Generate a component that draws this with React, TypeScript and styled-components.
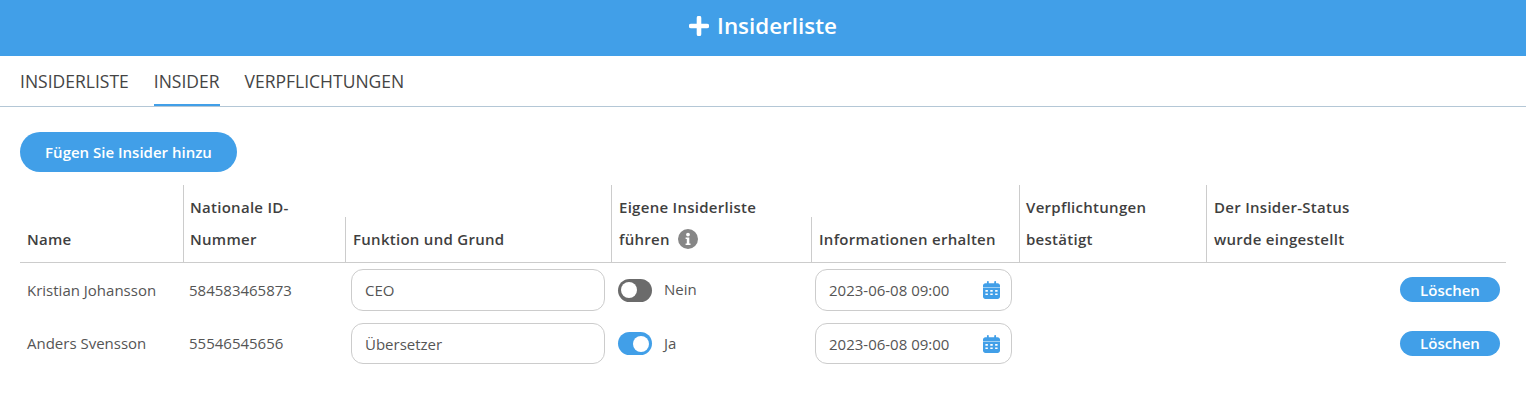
import React from "react";
import styled, { createGlobalStyle } from "styled-components";

const Global = createGlobalStyle`
  html, body { margin: 0; padding: 0; background: #fff; }
  body { font-family: "Open Sans", "Liberation Sans", sans-serif; color: #444; }
  * { box-sizing: border-box; }
`;

const Page = styled.div`
  width: 1526px;
  height: 408px;
  overflow: hidden;
`;

const Banner = styled.header`
  height: 56px;
  background: #419fe8;
  color: #fff;
  display: flex;
  align-items: center;
  justify-content: center;
  gap: 8px;
  padding-bottom: 5px;
  font-size: 22.4px;
  font-weight: 600;
`;

const Tabs = styled.nav`
  height: 51px;
  display: flex;
  gap: 25px;
  padding-left: 20px;
  border-bottom: 1px solid #b4c7d6;
`;

const Tab = styled.div<{ $active?: boolean }>`
  height: 50px;
  line-height: 51px;
  font-size: 17.5px;
  color: #444;
  border-bottom: ${(p) => (p.$active ? "2px solid #419fe8" : "none")};
`;

const Content = styled.main`
  padding: 25px 20px 0;
`;

const AddButton = styled.button`
  display: block;
  width: 217px;
  height: 40px;
  border: none;
  border-radius: 20px;
  background: #419fe8;
  color: #fff;
  font: 600 15px "Open Sans", sans-serif;
  padding: 0;
`;

const Table = styled.div`
  margin-top: 13px;
  width: 1486px;
  display: grid;
  grid-template-columns: 163px 162px 266px 200px 208px 187px 300px;
  grid-template-rows: 78px 54px 53px;
`;

const HeaderCell = styled.div<{ $short?: boolean; $first?: boolean; $tight?: boolean }>`
  height: ${(p) => (p.$short ? "46px" : "78px")};
  align-self: end;
  display: flex;
  align-items: flex-end;
  padding: 0 0 7px ${(p) => (p.$tight ? "6px" : "7px")};
  border-left: ${(p) => (p.$first ? "none" : "1px solid #ccc")};
  border-bottom: 1px solid #ccc;
  font-size: 15px;
  line-height: 32px;
  font-weight: 600;
  letter-spacing: 0.28px;
  color: #3f3f3f;
`;

const InfoBadge = styled.span`
  display: inline-block;
  margin-left: 4px;
  vertical-align: -4px;
  width: 20px;
  height: 20px;
`;

const Cell = styled.div<{ $end?: boolean }>`
  display: flex;
  align-items: center;
  padding: 0 6px 1px 7px;
  font-size: 15px;
  color: #555;
  justify-content: ${(p) => (p.$end ? "flex-end" : "flex-start")};
`;

const IdCell = styled(Cell)`
  padding-left: 6px;
`;

const FieldHost = styled(Cell)`
  padding: 0 6px;
`;

const Field = styled.div`
  width: 254px;
  height: calc(100% - 12px);
  border: 1px solid #ccc;
  border-radius: 12px;
  display: flex;
  align-items: center;
  justify-content: space-between;
  padding: 0 11px 0 13px;
  font-size: 15px;
  color: #555;
`;

const DateField = styled(Field)`
  width: 197px;
  margin-left: -2px;
`;

const SwitchHost = styled(Cell)`
  padding: 0 6px 0 7px;
`;

const SwitchTrack = styled.span<{ $on?: boolean }>`
  width: 34px;
  height: 23px;
  border-radius: 12px;
  background: ${(p) => (p.$on ? "#419fe8" : "#6b6b6b")};
  display: inline-flex;
  align-items: center;
  padding: 0 3px;
  justify-content: ${(p) => (p.$on ? "flex-end" : "flex-start")};
  margin-right: 12px;
`;

const SwitchKnob = styled.span`
  width: 16px;
  height: 16px;
  border-radius: 50%;
  background: #fff;
`;

const SwitchLabel = styled.span`
  margin-bottom: 2px;
`;

const DeleteButton = styled.button`
  width: 100px;
  height: 25px;
  border: none;
  border-radius: 13px;
  background: #419fe8;
  color: #fff;
  font: 600 15px "Open Sans", sans-serif;
  padding: 0;
`;

const Plus = () => (
  <svg width="20" height="20" viewBox="0 0 20 20">
    <path d="M10 2v16M2 10h16" stroke="#fff" strokeWidth="4.6" strokeLinecap="round" />
  </svg>
);

const Info = () => (
  <InfoBadge>
    <svg width="20" height="20" viewBox="0 0 20 20">
      <circle cx="10" cy="10" r="10" fill="#868686" />
      <circle cx="10" cy="5.6" r="1.9" fill="#fff" />
      <path d="M7.6 8.4h3.7v6h1.2v1.6H7.6v-1.6h1.2V10H7.6z" fill="#fff" />
    </svg>
  </InfoBadge>
);

const Calendar = () => (
  <svg width="17" height="18" viewBox="0 0 448 512" preserveAspectRatio="none" fill="#419fe8">
    <path d="M128 0c13 0 24 11 24 24v40h144V24c0-13 11-24 24-24s24 11 24 24v40h40c35 0 64 29 64 64v48H0v-48c0-35 29-64 64-64h40V24c0-13 11-24 24-24zM0 192h448v256c0 35-29 64-64 64H64c-35 0-64-29-64-64V192zm64 64v48h64v-48H64zm128 0v48h64v-48h-64zm128 0v48h64v-48h-64zM64 352v48h64v-48H64zm128 0v48h64v-48h-64zm128 0v48h64v-48h-64z" />
  </svg>
);

const rows = [
  { name: "Kristian Johansson", id: "584583465873", fn: "CEO", on: false, own: "Nein" },
  { name: "Anders Svensson", id: "55546545656", fn: "Übersetzer", on: true, own: "Ja" },
];

export default function App() {
  return (
    <Page>
      <Global />
      <Banner>
        <Plus />
        Insiderliste
      </Banner>
      <Tabs>
        <Tab>INSIDERLISTE</Tab>
        <Tab $active>INSIDER</Tab>
        <Tab>VERPFLICHTUNGEN</Tab>
      </Tabs>
      <Content>
        <AddButton>Fügen Sie Insider hinzu</AddButton>
        <Table>
          <HeaderCell $first><div>Name</div></HeaderCell>
          <HeaderCell $tight><div>Nationale ID-<br />Nummer</div></HeaderCell>
          <HeaderCell $short><div>Funktion und Grund</div></HeaderCell>
          <HeaderCell><div>Eigene Insiderliste<br />führen <Info /></div></HeaderCell>
          <HeaderCell $short><div>Informationen erhalten</div></HeaderCell>
          <HeaderCell $tight><div>Verpflichtungen<br />bestätigt</div></HeaderCell>
          <HeaderCell><div>Der Insider-Status<br />wurde eingestellt</div></HeaderCell>
          {rows.map((r) => (
            <React.Fragment key={r.name}>
              <Cell>{r.name}</Cell>
              <IdCell>{r.id}</IdCell>
              <FieldHost><Field>{r.fn}</Field></FieldHost>
              <SwitchHost>
                <SwitchTrack $on={r.on}><SwitchKnob /></SwitchTrack>
                <SwitchLabel>{r.own}</SwitchLabel>
              </SwitchHost>
              <FieldHost><DateField>2023-06-08 09:00<Calendar /></DateField></FieldHost>
              <Cell />
              <Cell $end><DeleteButton>Löschen</DeleteButton></Cell>
            </React.Fragment>
          ))}
        </Table>
      </Content>
    </Page>
  );
}
